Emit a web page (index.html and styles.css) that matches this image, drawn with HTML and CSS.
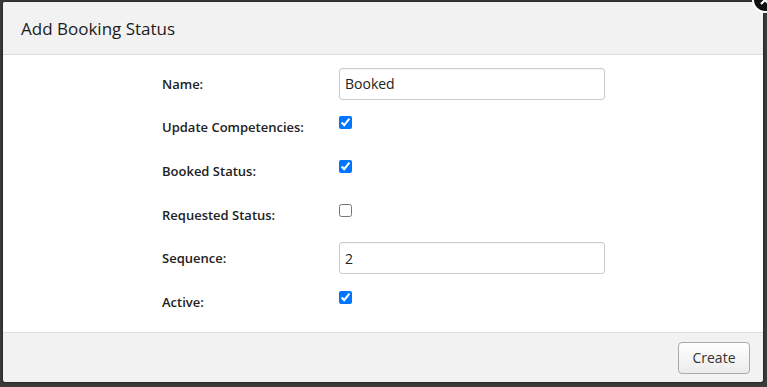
FILE: index.html
```html
<!DOCTYPE html>
<html lang="en">
  <head>
    <meta charset="UTF-8" />
    <meta name="viewport" content="width=device-width, initial-scale=1.0" />
    <title>Add Booking Status</title>
    <link rel="stylesheet" href="styles.css">
  </head>
  <body>
    <div class="dialog">
      <div class="dialog-header">
        <h1 class="dialog-title">Add Booking Status</h1>
      </div>
      <button type="button" class="dialog-close" aria-label="Close">
        <svg width="10" height="10" viewBox="0 0 10 10">
          <path d="M1 1L9 9M9 1L1 9" stroke="white" stroke-width="2.2" />
        </svg>
      </button>
      <form class="dialog-body">
        <div class="form-grid">
          <label for="name">Name:</label>
          <input type="text" id="name" class="text-input" value="Booked" />

          <label for="updateComp">Update Competencies:</label>
          <input type="checkbox" id="updateComp" class="check" checked />

          <label for="booked">Booked Status:</label>
          <input type="checkbox" id="booked" class="check" checked />

          <label for="requested">Requested Status:</label>
          <input type="checkbox" id="requested" class="check" />

          <label for="sequence">Sequence:</label>
          <input type="text" id="sequence" class="text-input" value="2" />

          <label for="active">Active:</label>
          <input type="checkbox" id="active" class="check" checked />
        </div>
      </form>
      <div class="dialog-footer">
        <button type="button" class="btn">Create</button>
      </div>
    </div>
  </body>
</html>
```

FILE: styles.css
```css
:root {
  --panel: #f2f2f2;
  --line: #dcdcdc;
  --text: #222;
}
html,
body {
  height: 100%;
}
body {
  margin: 0;
  padding: 2px 4px 5px 3px;
  box-sizing: border-box;
  background: #3b3b3b;
  font-family: "Open Sans", "Noto Sans", sans-serif;
  color: var(--text);
  overflow: hidden;
}
.dialog {
  position: relative;
  height: 100%;
  display: flex;
  flex-direction: column;
  background: white;
  border-radius: 2px 2px 3px 3px;
  box-shadow: 0 0 2px 1px rgba(0, 0, 0, 0.35);
}
.dialog-header {
  background: var(--panel);
  border-bottom: 1px solid var(--line);
  height: 52px;
  display: flex;
  align-items: center;
  padding: 0 18px;
  border-radius: 2px 2px 0 0;
}
.dialog-title {
  margin: 0;
  font-size: 17px;
  font-weight: 400;
  color: #1c1c1c;
}
.dialog-close {
  position: absolute;
  top: -15px;
  right: -15px;
  width: 26px;
  height: 26px;
  padding: 0;
  border: 2px solid white;
  border-radius: 50%;
  background: #111;
  display: flex;
  align-items: center;
  justify-content: center;
}
.dialog-body {
  flex: 1;
  margin: 0;
  padding: 7px 0 0 159px;
}
.form-grid {
  display: grid;
  grid-template-columns: 177px 266px;
  grid-auto-rows: 43.6px;
  align-items: center;
}
label {
  font-size: 13px;
  font-weight: 600;
  color: var(--text);
}
.text-input {
  height: 32px;
  box-sizing: border-box;
  padding: 0 5px;
  border: 1px solid #ccc;
  border-radius: 3px;
  box-shadow: inset 0 1px 1px rgba(0, 0, 0, 0.04);
  font-family: inherit;
  font-size: 14px;
  color: var(--text);
}
.check {
  width: 13px;
  height: 13px;
  margin: 0 0 9px 0;
}
.dialog-footer {
  background: var(--panel);
  border-top: 1px solid var(--line);
  height: 49px;
  display: flex;
  justify-content: flex-end;
  align-items: center;
  padding: 0 13px;
  border-radius: 0 0 3px 3px;
}
.btn {
  width: 72px;
  height: 32px;
  border: 1px solid #aaa;
  border-radius: 4px;
  background: linear-gradient(#fff, #ececec);
  font-family: inherit;
  font-size: 14px;
  color: #333;
  cursor: pointer;
}
```
